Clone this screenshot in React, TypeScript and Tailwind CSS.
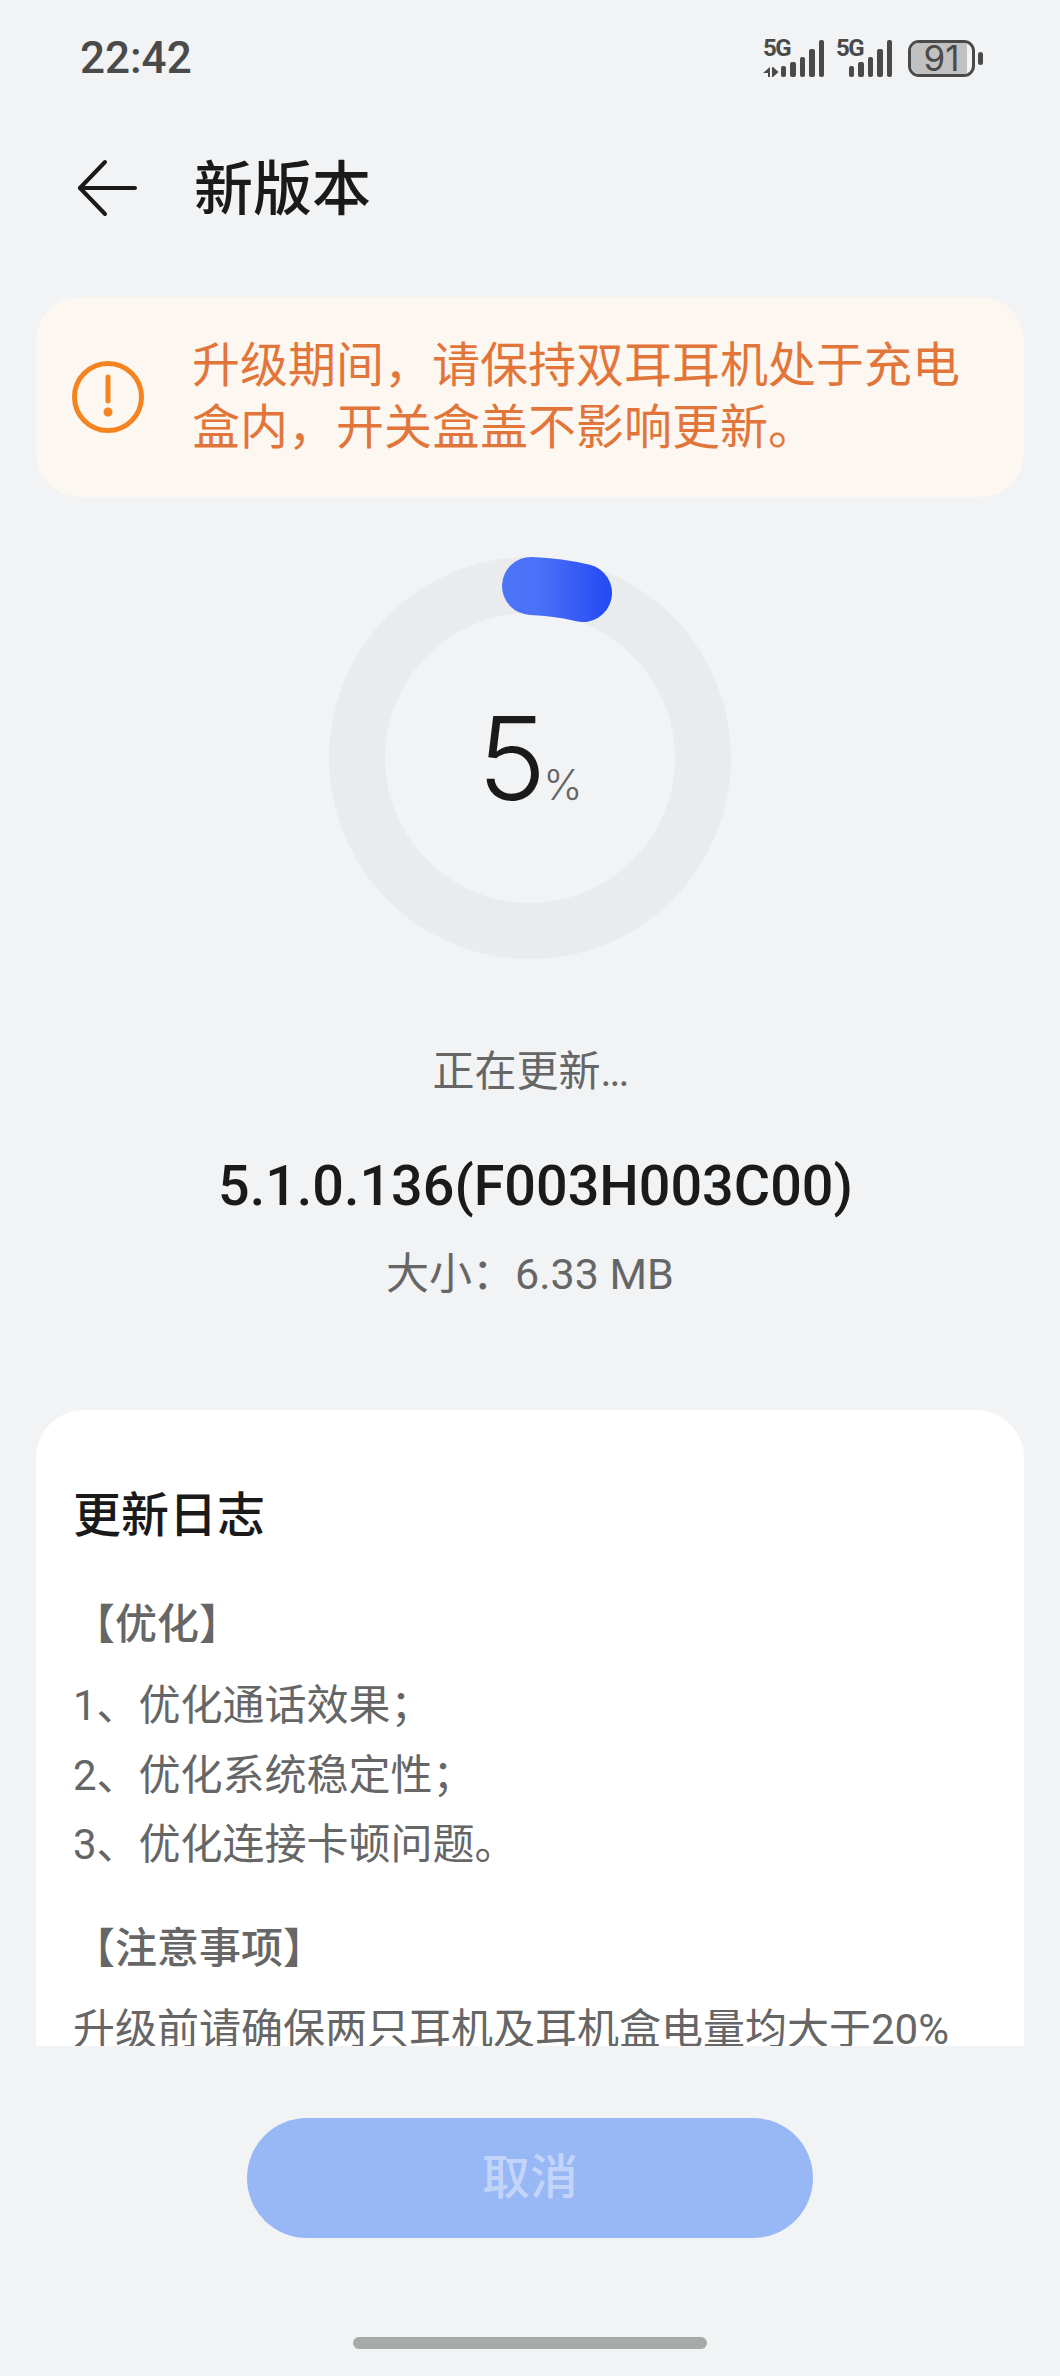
const cjk = "font-['Roboto','Noto_Sans_CJK_SC',sans-serif]";

function Signal({ arrows, width }: { arrows?: boolean; width: string }) {
  const heights = ["h-[11px]", "h-[15px]", "h-[20px]", "h-[28px]", "h-[37px]"];
  return (
    <div className={`relative h-[37px] flex items-end justify-end gap-[4px] ${width}`}>
      {heights.map((h) => (
        <div key={h} className={`w-[5.5px] rounded-[2px] bg-[#4a4a4a] ${h}`} />
      ))}
      <span className="absolute left-0 top-[-4px] font-['Roboto',sans-serif] text-[24px] leading-[24px] font-bold tracking-[-1.5px] text-[#4a4a4a]">
        5G
      </span>
      {arrows && (
        <svg className="absolute left-0 bottom-0" width="17" height="10" viewBox="0 0 17 10">
          <path d="M7 0V10H5V6H0Z M10 0L15.5 5L10 10Z M9 0h1v10H9z" fill="#4a4a4a" />
        </svg>
      )}
    </div>
  );
}

function Battery() {
  return (
    <div className="flex items-center gap-[3px]">
      <div className="relative h-[37px] w-[67px] overflow-hidden rounded-[11px] border-[3.5px] border-[#4a4a4a] flex items-center justify-center">
        <div className="absolute inset-y-0 left-0 w-[56px] bg-[#c1c1c1]" />
        <span className="relative font-['Inter',sans-serif] text-[35px] leading-[30px] text-[#4a4a4a]">91</span>
      </div>
      <div className="h-[13px] w-[5px] rounded-[2.5px] bg-[#4a4a4a]" />
    </div>
  );
}

function Progress() {
  return (
    <div className="relative h-[402px] w-[402px] self-center mt-[60px]">
      <svg width="402" height="402" viewBox="0 0 402 402">
        <defs>
          <linearGradient id="blob" gradientUnits="userSpaceOnUse" x1="172" y1="0" x2="283" y2="0">
            <stop offset="0" stopColor="#4d75f9" />
            <stop offset="0.35" stopColor="#4a70f8" />
            <stop offset="1" stopColor="#2448f3" />
          </linearGradient>
        </defs>
        <circle cx="201" cy="201" r="173" fill="none" stroke="#eaebed" strokeWidth="56" />
        <path d="M202 29 Q229 30 254 36" fill="none" stroke="url(#blob)" strokeWidth="58" strokeLinecap="round" />
      </svg>
      <div className="absolute inset-0 flex items-baseline justify-center pt-[133px]">
        <span className="font-['Inter',sans-serif] text-[116px] leading-[136px] font-light text-[#1a1a1a]">5</span>
        <span className="ml-[-3px] font-['Inter',sans-serif] text-[42px] leading-none font-light text-[#666666]">%</span>
      </div>
    </div>
  );
}

export default function App() {
  return (
    <div lang="zh-CN" className={`flex h-[2376px] w-[1060px] flex-col overflow-hidden bg-[#f1f3f5] ${cjk}`}>
      <div className="flex h-[116px] shrink-0 items-center justify-between pl-[80px] pr-[77px]">
        <span className="font-['Roboto',sans-serif] text-[44px] leading-none font-medium text-[#4a4a4a]">22:42</span>
        <div className="flex items-center">
          <Signal arrows width="w-[61px]" />
          <div className="w-[12px]" />
          <Signal width="w-[56px]" />
          <div className="w-[16px]" />
          <Battery />
        </div>
      </div>

      <div className="flex h-[144px] shrink-0 items-center pl-[76px]">
        <svg width="64" height="58" viewBox="0 0 64 58" fill="none" stroke="#1a1a1a" strokeWidth="4" strokeLinecap="round" strokeLinejoin="round">
          <path d="M29 3L4 29L29 55" />
          <path d="M4 29H59" />
        </svg>
        <span className="ml-[54px] mt-[3px] text-[59px] leading-none font-medium text-[#1a1a1a]">新版本</span>
      </div>

      <div className="mx-[36px] mt-[37px] flex h-[200px] shrink-0 items-center rounded-[44px] bg-[#fdf7f2] pl-[36px]">
        <svg width="72" height="72" viewBox="0 0 72 72" fill="none" className="shrink-0">
          <circle cx="36" cy="36" r="33.5" stroke="#f5831f" strokeWidth="5" />
          <path d="M36 16V40" stroke="#f5831f" strokeWidth="5" strokeLinecap="round" />
          <circle cx="36" cy="51" r="4.5" fill="#f5831f" />
        </svg>
        <p className="ml-[48px] w-[780px] text-[48px] leading-[62px] text-[#e2763a]">
          升级期间，请保持双耳耳机处于充电盒内，开关盒盖不影响更新。
        </p>
      </div>

      <Progress />

      <div className="mt-[83px] h-[60px] shrink-0 text-center text-[42px] leading-[60px] text-[#666666]">
        正在更新<span className="tracking-[-2px]">...</span>
      </div>
      <div className="mt-[49px] h-[70px] shrink-0 pl-[11px] text-center text-[55.7px] leading-[70px] font-medium text-[#1a1a1a]">
        5.1.0.136(F003H003C00)
      </div>
      <div className="mt-[23px] h-[60px] shrink-0 text-center text-[43px] leading-[60px] text-[#666666]">大小：6.33 MB</div>

      <div className="mx-[36px] mt-[106px] h-[636px] shrink-0 overflow-hidden rounded-t-[48px] bg-white px-[37px] pt-[74px] text-[42px] text-[#666666]">
        <h2 className="h-[64px] text-[48px] leading-[64px] font-medium text-[#1a1a1a]">更新日志</h2>
        <p className="mt-[46px] h-[62px] leading-[62px] font-medium">【优化】</p>
        <div className="mt-[15px] leading-[69.5px]">
          <p>1、优化通话效果；</p>
          <p>2、优化系统稳定性；</p>
          <p>3、优化连接卡顿问题。</p>
        </div>
        <p className="mt-[38px] h-[62px] leading-[62px] font-medium">【注意事项】</p>
        <p className="mt-[19px] leading-[62px] whitespace-nowrap">升级前请确保两只耳机及耳机盒电量均大于20%</p>
      </div>

      <div className="mt-[72px] flex h-[120px] w-[566px] shrink-0 items-center justify-center self-center rounded-full bg-[#98b7f5] text-[48px] font-medium text-[#c3d4fa]">
        取消
      </div>
      <div className="mt-[99px] h-[12px] w-[354px] shrink-0 self-center rounded-full bg-[#a8a9a9]" />
    </div>
  );
}
